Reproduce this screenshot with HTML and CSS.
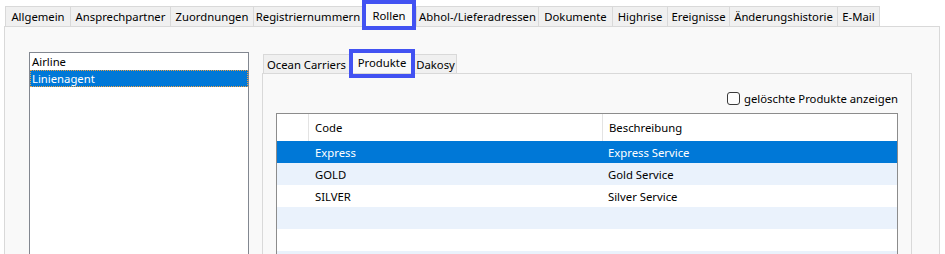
FILE: index.html
```html
<!DOCTYPE html>
<html lang="de">
<head>
<meta charset="utf-8">
<title>Rollen</title>
<link rel="stylesheet" href="styles.css">
</head>
<body>
<div class="tabs top">
  <div class="tab">Allgemein</div>
  <div class="tab">Ansprechpartner</div>
  <div class="tab">Zuordnungen</div>
  <div class="tab">Registriernummern</div>
  <div class="tab sel">Rollen</div>
  <div class="tab">Abhol-/Lieferadressen</div>
  <div class="tab">Dokumente</div>
  <div class="tab">Highrise</div>
  <div class="tab">Ereignisse</div>
  <div class="tab">Änderungshistorie</div>
  <div class="tab last">E-Mail</div>
</div>
<div class="page">
  <div class="list">
    <div class="item">Airline</div>
    <div class="item sel">Linienagent</div>
  </div>
  <div class="sub">
    <div class="tabs inner">
      <div class="tab">Ocean Carriers</div>
      <div class="tab sel">Produkte</div>
      <div class="tab last">Dakosy</div>
    </div>
    <div class="subpage">
      <label class="check"><span class="box"></span><span>gelöschte Produkte anzeigen</span></label>
      <div class="grid">
        <div class="row head"><div class="rh"></div><div class="c1">Code</div><div class="c2">Beschreibung</div></div>
        <div class="row sel"><div class="rh"></div><div class="c1">Express</div><div class="c2">Express Service</div></div>
        <div class="row alt"><div class="rh"></div><div class="c1">GOLD</div><div class="c2">Gold Service</div></div>
        <div class="row"><div class="rh"></div><div class="c1">SILVER</div><div class="c2">Silver Service</div></div>
        <div class="row alt"></div>
        <div class="row"></div>
        <div class="row alt"></div>
      </div>
    </div>
  </div>
</div>
</body>
</html>
```
FILE: styles.css
```css
html, body {
  margin: 0;
  background: #ffffff;
}
body {
  font-family: "Noto Sans", "DejaVu Sans", sans-serif;
  font-size: 11.3px;
  color: #000;
  height: 254px;
  overflow: hidden;
}
.tabs {
  display: grid;
  align-items: end;
}
.tabs.top {
  grid-template-columns: 65px 100px 83px 109px 54px 122px 74px 55px 62px 108px 43px;
  height: 26px;
  padding-left: 5px;
}
.tabs.inner {
  grid-template-columns: 86px 66px 42px;
  height: 21px;
  padding-left: 1px;
}
.tab {
  box-sizing: border-box;
  height: 20px;
  border-top: 1px solid #d9d9d9;
  border-left: 1px solid #d9d9d9;
  background: #f0f0f0;
  display: flex;
  align-items: center;
  justify-content: center;
  white-space: nowrap;
  overflow: hidden;
}
.tab.last {
  border-right: 1px solid #d9d9d9;
}
.tabs.inner .tab {
  height: 19px;
}
.tab.sel {
  position: relative;
  height: 22px;
  background: #f9f9f9;
  overflow: visible;
  z-index: 2;
  border: none;
}
.tab.sel::after {
  content: "";
  position: absolute;
  left: 0;
  right: 0;
  top: -4px;
  bottom: -4px;
  border: 4px solid #4252f2;
}
.tabs.inner .tab.sel {
  height: 21px;
}
.tabs.inner .tab.sel::after {
  top: -3px;
  bottom: -5px;
}
.tabs.inner .tab.last {
  border-left: none;
}
.page {
  box-sizing: border-box;
  margin: 0 5px 0 4px;
  height: 228px;
  border: 1px solid #d9d9d9;
  border-bottom: none;
  background: #f9f9f9;
  padding: 25px 0 0 24px;
  display: flex;
  overflow: hidden;
}
.list {
  box-sizing: border-box;
  width: 220px;
  height: 202px;
  border: 1px solid #828790;
  border-bottom: none;
  background: #fff;
}
.item {
  height: 17px;
  line-height: 17px;
  padding-left: 2px;
}
.item.sel {
  background: #0078d7;
  color: #fff;
  outline: 1px dotted #f0a040;
  outline-offset: -1px;
}
.sub {
  margin-left: 13px;
  width: 650px;
  display: flex;
  flex-direction: column;
}
.subpage {
  flex: 1;
  display: flex;
  flex-direction: column;
  border: 1px solid #d9d9d9;
  border-bottom: none;
  background: #f9f9f9;
  padding: 14px 13px 0;
}
.check {
  display: flex;
  align-items: center;
  justify-content: flex-end;
  gap: 4px;
  height: 20px;
}
.box {
  box-sizing: border-box;
  width: 13px;
  height: 13px;
  border: 1px solid #3a3a3a;
  border-radius: 3px;
  background: #fdfdfd;
}
.grid {
  flex: 1;
  margin-top: 5px;
  border: 1px solid #8c8c8c;
  border-bottom: none;
  background: #fff;
  overflow: hidden;
}
.row {
  display: grid;
  grid-template-columns: 31px 294px 1fr;
  height: 22px;
  align-items: center;
  white-space: nowrap;
}
.row.head {
  height: 27px;
  align-items: stretch;
}
.row.head .c1,
.row.head .c2 {
  border-left: 1px solid #e3e3e3;
  padding-left: 6px;
  display: flex;
  align-items: center;
}
.c1 {
  padding-left: 7px;
}
.c2 {
  padding-left: 6px;
}
.row.sel {
  background: #0078d7;
  color: #fff;
}
.row.alt {
  background: #eaf2fc;
}
```
